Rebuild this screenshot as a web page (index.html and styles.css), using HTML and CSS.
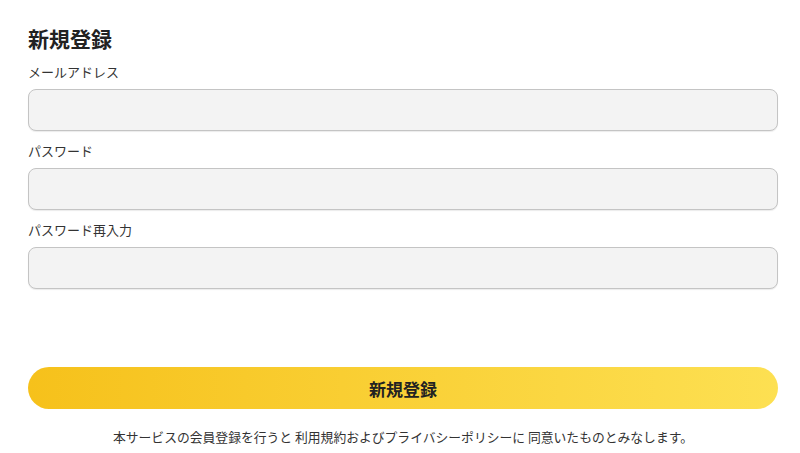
FILE: index.html
```html
<!DOCTYPE html>
<html lang="ja">
<head>
  <meta charset="UTF-8">
  <meta name="viewport" content="width=device-width, initial-scale=1.0">
  <title>新規登録</title>
  <link rel="stylesheet" href="styles.css">
</head>
<body>
  <main class="registro">
    <h1>新規登録</h1>
    <form class="formulario" onsubmit="return false">
      <label class="etiqueta" for="email">メールアドレス</label>
      <input class="campo" id="email" type="email">

      <label class="etiqueta" for="password">パスワード</label>
      <input class="campo" id="password" type="password">

      <label class="etiqueta" for="password2">パスワード再入力</label>
      <input class="campo" id="password2" type="password">

      <button class="registrar-btn" type="submit">新規登録</button>
    </form>
    <p class="aviso">本サービスの会員登録を行うと 利用規約およびプライバシーポリシーに 同意いたものとみなします。</p>
  </main>
</body>
</html>
```

FILE: styles.css
```css
body {
  margin: 0;
  background-color: #fff;
  color: #333;
  font-family: "Noto Sans CJK JP", "Noto Sans", sans-serif;
}

.registro {
  padding: 24px 22px 0 28px;
}

h1 {
  margin: 0;
  font-size: 21px;
  line-height: 28px;
  font-weight: 700;
  color: #222;
}

.formulario {
  display: flex;
  flex-direction: column;
}

.etiqueta {
  margin: 10px 0 7px;
  font-size: 13px;
  line-height: 20px;
  color: #333;
}

.campo {
  height: 42px;
  box-sizing: border-box;
  border: 1px solid #c4c4c4;
  border-radius: 8px;
  background-color: #f3f3f3;
  box-shadow: 0 1px 1px rgba(0, 0, 0, 0.08);
  font-size: 14px;
  padding: 0 12px;
}

.registrar-btn {
  margin-top: 78px;
  height: 42px;
  border: none;
  border-radius: 21px;
  background: linear-gradient(90deg, #f6c11b, #fde052);
  color: #222;
  font-family: inherit;
  font-size: 17px;
  font-weight: 700;
  cursor: pointer;
}

.aviso {
  margin: 19px 0 0;
  text-align: center;
  font-size: 12.8px;
  line-height: 18px;
  color: #333;
}
```
